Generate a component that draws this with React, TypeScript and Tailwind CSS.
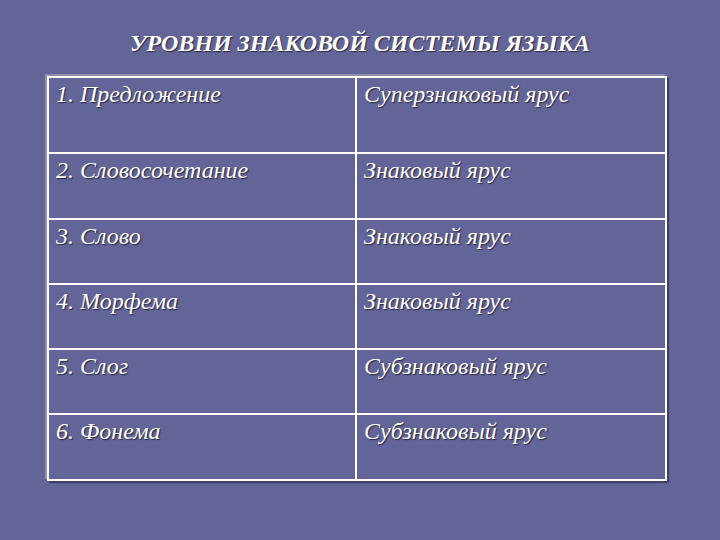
const rows = [
  { level: '1. Предложение', tier: 'Суперзнаковый ярус', h: 'h-[74px]' },
  { level: '2. Словосочетание', tier: 'Знаковый ярус', h: 'h-[66px]' },
  { level: '3. Слово', tier: 'Знаковый ярус', h: 'h-[65px]' },
  { level: '4. Морфема', tier: 'Знаковый ярус', h: 'h-[65px]' },
  { level: '5. Слог', tier: 'Субзнаковый ярус', h: 'h-[65px]' },
  { level: '6. Фонема', tier: 'Субзнаковый ярус', h: 'h-[66px]' },
];

const App = () => {
  return (
    <div
      className="w-[720px] h-[540px] bg-[#636497] text-white overflow-hidden"
      style={{ fontFamily: '"Liberation Serif", "DejaVu Serif", serif' }}
    >
      <h1 className="pt-[27px] h-[76px] text-center text-[24px] leading-[32px] font-bold italic [text-shadow:1px_1px_1px_#2a2a40]">
        УРОВНИ ЗНАКОВОЙ СИСТЕМЫ ЯЗЫКА
      </h1>

      <div className="ml-[47px] w-[620px] border-2 border-white shadow-[-2px_-2px_0_#8f90b0,2px_2px_1px_#3f4066]">
        {rows.map((row, i) => (
          <div
            key={i}
            className={`grid grid-cols-[308px_1fr] ${row.h} ${i > 0 ? 'border-t-2 border-white' : ''}`}
          >
            <div className="border-r-2 border-white pl-[7px] pt-[1px] text-[24px] leading-[30px] italic [text-shadow:1px_1px_1px_#26263a]">
              {row.level}
            </div>
            <div className="pl-[7px] pt-[1px] text-[24px] leading-[30px] italic [text-shadow:1px_1px_1px_#26263a]">
              {row.tier}
            </div>
          </div>
        ))}
      </div>
    </div>
  );
};

export default App;
